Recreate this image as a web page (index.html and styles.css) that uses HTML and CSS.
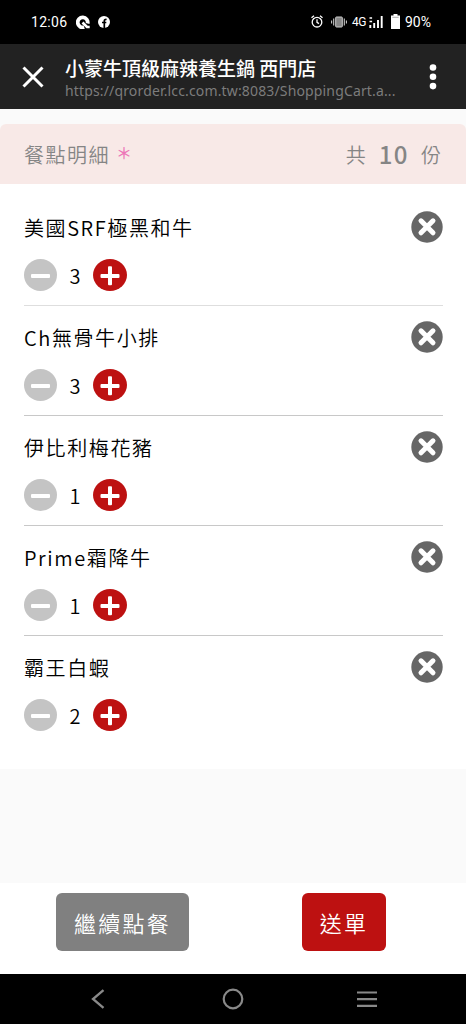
FILE: index.html
```html
<!DOCTYPE html>
<html lang="zh-Hant">
<head>
<meta charset="utf-8">
<title>小蒙牛頂級麻辣養生鍋 西門店</title>
<link rel="stylesheet" href="styles.css">
</head>
<body>
<svg width="0" height="0" class="sprite">
  <symbol id="minus" viewBox="0 0 33 32"><ellipse cx="16.5" cy="16" rx="16.5" ry="16" fill="#c4c4c4"/><rect x="7" y="15" width="19" height="4" rx="1" fill="#fff"/></symbol>
  <symbol id="plus" viewBox="0 0 34 32"><ellipse cx="17" cy="16" rx="17" ry="16" fill="#bd1111"/><rect x="7.500" y="15" width="19" height="4" rx="1" fill="#fff"/><rect x="15" y="7.300" width="4" height="19" rx="1" fill="#fff"/></symbol>
  <symbol id="remove" viewBox="0 0 32 32"><circle cx="16" cy="16" r="15.700" fill="#666"/><path d="M10 9.800l12 12M22 9.800l-12 12" stroke="#fff" stroke-width="5" stroke-linecap="round"/></symbol>
</svg>
<div class="statusbar">
  <span class="clock">12:06</span>
  <svg class="q-icon" width="14" height="14" viewBox="0 0 14 14"><path d="M8.200 12.200A5 5 0 1 1 11.600 8.500" fill="none" stroke="#fff" stroke-width="3.800"/><path d="M6.500 7.500l4.500 4.500h2.700" fill="none" stroke="#fff" stroke-width="2.600"/></svg>
  <svg class="f-icon" width="12" height="12" viewBox="0 0 12 12"><circle cx="6" cy="6" r="6" fill="#fff"/><path d="M6.300 12V5q0-1.800 2.300-1.500M4 6.500h4.300" fill="none" stroke="#000" stroke-width="1.700"/></svg>
  <div class="status-right">
    <svg width="12" height="13" viewBox="0 0 12 13" fill="none" stroke="#fff" stroke-width="1.300"><circle cx="6" cy="7.200" r="4.800"/><path d="M6 4.300v3l2 1.300M.5 2.800L3 .8M9 .8l2.500 2"/></svg>
    <svg class="vibrate" width="16" height="12" viewBox="0 0 16 12"><rect x="4.700" y="1" width="6.600" height="10" rx=".7" fill="#888" stroke="#ccc"/><path d="M2.700 2.500v7M.6 4.500v3M13.300 2.500v7M15.400 4.500v3" stroke="#ccc" stroke-width="1.100"/></svg>
    <span class="network">4G</span>
    <svg class="signal" width="14" height="13" viewBox="0 0 14 13" fill="none" stroke="#fff"><path d="M.5 3h2.600M.5 6.500h2.600" stroke-width="1.600"/><path d="M1.300 10v3M5.200 8v5M9 5v8M12.700 1v12" stroke-width="1.900"/></svg>
    <svg class="battery" width="9" height="15" viewBox="0 0 9 15"><path d="M2.500 0h4v1.500H9V15H0V1.500h2.500z" fill="#fff"/><path d="M1.300 3.300h6.400" stroke="#999" stroke-width=".8"/></svg>
    <span class="percent">90%</span>
  </div>
</div>
<header class="titlebar">
  <svg class="close" width="22" height="22" viewBox="0 0 22 22"><path d="M1.500 1.500l19 19M20.500 1.500l-19 19" stroke="#fff" stroke-width="3"/></svg>
  <div class="heading">
    <div class="title">小蒙牛頂級麻辣養生鍋 西門店</div>
    <div class="url">https://qrorder.lcc.com.tw:8083/ShoppingCart.a...</div>
  </div>
  <svg class="more" width="8" height="26" viewBox="0 0 8 26" fill="#fff"><circle cx="4" cy="3.500" r="3.300"/><circle cx="4" cy="12.800" r="3.300"/><circle cx="4" cy="22.100" r="3.300"/></svg>
</header>
<main>
  <div class="summary">
    <span class="label">餐點明細<span class="star">＊</span></span>
    <span class="total">共<b>10</b>份</span>
  </div>
  <div class="items">
    <div class="item"><div class="name">美國SRF極黑和牛</div><svg class="remove"><use href="#remove"/></svg><div class="qty"><svg class="minus"><use href="#minus"/></svg><span>3</span><svg class="plus"><use href="#plus"/></svg></div></div>
    <div class="item"><div class="name">Ch無骨牛小排</div><svg class="remove"><use href="#remove"/></svg><div class="qty"><svg class="minus"><use href="#minus"/></svg><span>3</span><svg class="plus"><use href="#plus"/></svg></div></div>
    <div class="item"><div class="name">伊比利梅花豬</div><svg class="remove"><use href="#remove"/></svg><div class="qty"><svg class="minus"><use href="#minus"/></svg><span>1</span><svg class="plus"><use href="#plus"/></svg></div></div>
    <div class="item"><div class="name">Prime霜降牛</div><svg class="remove"><use href="#remove"/></svg><div class="qty"><svg class="minus"><use href="#minus"/></svg><span>1</span><svg class="plus"><use href="#plus"/></svg></div></div>
    <div class="item"><div class="name">霸王白蝦</div><svg class="remove"><use href="#remove"/></svg><div class="qty"><svg class="minus"><use href="#minus"/></svg><span>2</span><svg class="plus"><use href="#plus"/></svg></div></div>
  </div>
</main>
<div class="actions">
  <div class="btn continue">繼續點餐</div>
  <div class="btn submit">送單</div>
</div>
<nav class="navbar">
  <svg width="14" height="20" viewBox="0 0 14 20"><path d="M12.500 1.200L2 10l10.500 8.800" fill="none" stroke="#898989" stroke-width="2.300"/></svg>
  <svg class="home" width="22" height="22" viewBox="0 0 22 22"><circle cx="11" cy="11" r="9.300" fill="none" stroke="#898989" stroke-width="2.200"/></svg>
  <svg width="22" height="18" viewBox="0 0 22 18"><path d="M1 2.500h20M1 9.200h20M1 15.900h20" stroke="#898989" stroke-width="2.200"/></svg>
</nav>
</body>
</html>
```
FILE: styles.css
```css
* { box-sizing: border-box; }
body {
  margin: 0;
  width: 466px;
  height: 1024px;
  display: flex;
  flex-direction: column;
  overflow: hidden;
  background: #fafafa;
  font-family: "Noto Sans CJK TC", sans-serif;
  font-weight: 350;
}
svg { display: block; flex: none; }
.sprite { position: absolute; }
.statusbar {
  height: 44px;
  flex: none;
  display: flex;
  align-items: center;
  padding: 0 35px 1px 31px;
  background: #000;
  color: #fff;
  font: 400 14px/20px Roboto, sans-serif;
}
.clock { width: 45px; letter-spacing: .3px; }
.f-icon { margin-left: 8px; }
.status-right { margin-left: auto; display: flex; align-items: center; }
.vibrate { margin-left: 8px; }
.network { margin-left: 5px; font-size: 12px; width: 17px; letter-spacing: -.5px; }
.signal { flex: none; }
.battery { margin-left: 8px; }
.percent { margin-left: 5px; width: 26px; }
.titlebar {
  height: 65px;
  flex: none;
  display: flex;
  padding: 0 29px 0 22px;
  background: #222;
  color: #fff;
}
.close { margin-top: 22px; }
.heading { margin-left: 21px; flex: 1; white-space: nowrap; }
.title { margin-top: 11px; font-size: 19px; line-height: 26px; font-weight: 500; }
.url { margin-top: 1px; font: 400 14px/18px "Noto Sans", sans-serif; color: #7c7c7c; letter-spacing: .15px; }
.more { margin-top: 20px; }
.summary {
  height: 60px;
  margin-top: 15px;
  padding: 1px 25px 0 24px;
  display: flex;
  align-items: center;
  justify-content: space-between;
  border-radius: 6px 6px 0 0;
  background: #f8e9e7;
  color: #858585;
  font-size: 20px;
  letter-spacing: 1.5px;
}
.label { display: flex; align-items: center; }
.star { margin: -6px 0 0 6px; color: #ed76b8; font-size: 16px; line-height: 20px; font-weight: 500; }
.total { display: flex; align-items: center; letter-spacing: 0; }
.total b { margin: -2px 12px 0 13px; font-size: 24px; font-weight: 500; letter-spacing: 1.5px; line-height: 30px; }
.items { height: 585px; background: #fff; padding: 12px 23px 0 24px; }
.item {
  height: 110px;
  display: grid;
  grid-template-columns: 1fr 32px;
  grid-template-rows: 63px 32px;
  border-bottom: 1px solid #c8c8c8;
  color: #000;
}
.item:first-child { border-color: #dedede; }
.item:last-child { border: 0; }
.name { margin-top: 17px; font-size: 20px; line-height: 30px; letter-spacing: 1.6px; }
.remove { width: 32px; height: 32px; margin-top: 15px; }
.qty { display: flex; align-items: center; }
.qty span { width: 36px; padding-top: 2px; text-align: center; font-size: 20px; line-height: 32px; }
.minus { width: 33px; height: 32px; }
.plus { width: 34px; height: 32px; }
.actions {
  height: 91px;
  flex: none;
  margin-top: auto;
  display: flex;
  justify-content: space-between;
  align-items: flex-start;
  padding: 10px 80px 0 56px;
  background: #fff;
}
.btn {
  height: 58px;
  border-radius: 6px;
  color: #fff;
  font-size: 22px;
  line-height: 59px;
  letter-spacing: 2.3px;
  text-align: center;
}
.continue { width: 133px; background: #808080; }
.submit { width: 84px; background: #bd1111; }
.navbar {
  height: 50px;
  flex: none;
  display: flex;
  align-items: center;
  justify-content: space-between;
  padding: 0 88px 0 91px;
  background: #000;
}
.home { margin-left: 4px; }
```
